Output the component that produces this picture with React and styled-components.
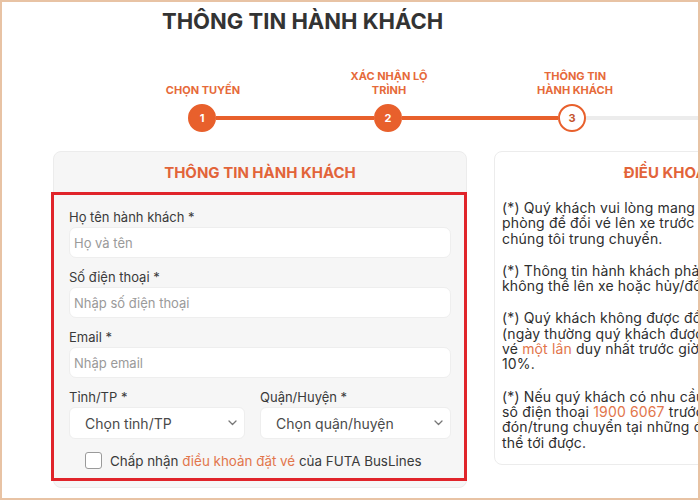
import React from "react";
import styled, { createGlobalStyle } from "styled-components";

const Global = createGlobalStyle`
  html, body { margin: 0; padding: 0; background: #fff; }
  * { box-sizing: border-box; }
  body { font-family: Inter, "Noto Sans", sans-serif; color: #333; }
`;

const Frame = styled.div`
  width: 700px;
  height: 500px;
  border: 2px solid #e8c3a4;
  overflow: hidden;
  background: #fff;
  position: relative;
`;

const Title = styled.h1`
  margin: 0;
  padding: 5px 0 0 160px;
  font-size: 22px;
  line-height: 29px;
  font-weight: 700;
  color: #333;
`;

const Stepper = styled.div`
  margin-top: 33px;
  padding-left: 140px;
`;

const LabelRow = styled.div`
  display: flex;
  align-items: flex-end;
  gap: 64px;
`;

const StepLabel = styled.div`
  width: 122px;
  text-align: center;
  font-size: 11px;
  line-height: 14px;
  font-weight: 700;
  color: #e66a3a;
`;

const TrackRow = styled.div`
  display: flex;
  align-items: center;
  margin-top: 7px;
  padding-left: 46px;
`;

const Circle = styled.div`
  width: 28px;
  height: 28px;
  border-radius: 50%;
  flex: none;
  display: flex;
  align-items: center;
  justify-content: center;
  font-size: 11px;
  font-weight: 700;
  background: ${(p) => (p.$done ? "#e8602c" : "#fff")};
  color: ${(p) => (p.$done ? "#fff" : "#c4552e")};
  border: 2px solid #e8602c;
`;

const Line = styled.div`
  height: 4px;
  width: ${(p) => p.$w}px;
  flex: ${(p) => (p.$w ? "none" : "1")};
  background: ${(p) => (p.$gray ? "#ececec" : "#e8602c")};
`;

const Cards = styled.div`
  display: flex;
  gap: 27px;
  margin-top: 19px;
  padding-left: 51px;
  align-items: flex-start;
`;

const Card = styled.div`
  flex: none;
  width: ${(p) => p.$w}px;
  border: 1px solid #ececec;
  border-radius: 8px;
  background: ${(p) => p.$bg};
`;

const CardHeader = styled.div`
  height: 40px;
  display: flex;
  align-items: center;
  justify-content: center;
  font-size: 15px;
  font-weight: 700;
  color: #e2643a;
  white-space: nowrap;
`;

const FormBox = styled.div`
  margin: 0 0 6px -3px;
  width: 416px;
  border: 3px solid #e0242a;
  padding: 14px 13px 9px 15px;
  display: flex;
  flex-direction: column;
  gap: 11px;
`;

const Field = styled.div`
  display: flex;
  flex-direction: column;
  gap: 2px;
`;

const Label = styled.label`
  font-size: 13px;
  line-height: 16px;
  color: #3a3a3a;
`;

const Input = styled.input`
  height: 31px;
  width: 100%;
  border: 1px solid #eeeeee;
  border-radius: 7px;
  background: #fff;
  padding: 0 4px;
  font-family: inherit;
  font-size: 13px;
  color: #333;
  outline: none;
  &::placeholder { color: #9a9a9a; }
`;

const Row = styled.div`
  display: grid;
  grid-template-columns: 176px 1fr;
  gap: 15px;
`;

const SelectBox = styled.div`
  height: 32px;
  border: 1px solid #eeeeee;
  border-radius: 6px;
  background: #fff;
  display: flex;
  align-items: center;
  justify-content: space-between;
  padding: 0 7px 0 15px;
  font-size: 14px;
  color: #4a4a4a;
`;

const Chevron = () => (
  <svg width="9" height="6" viewBox="0 0 9 6">
    <path d="M1 1l3.5 3.5L8 1" fill="none" stroke="#777" strokeWidth="1.3" strokeLinecap="round" strokeLinejoin="round" />
  </svg>
);

const CheckRow = styled.div`
  display: flex;
  align-items: center;
  gap: 8px;
  padding-left: 16px;
  margin-top: 2px;
  font-size: 13.4px;
  color: #3a3a3a;
`;

const Box = styled.span`
  width: 17px;
  height: 17px;
  border: 1.5px solid #9a9a9a;
  border-radius: 3px;
  background: #fff;
  flex: none;
`;

const Accent = styled.span`
  color: #e2754b;
`;

const Terms = styled.div`
  padding: 8px 8px 14px 7px;
  display: flex;
  flex-direction: column;
  gap: 17px;
`;

const Para = styled.p`
  margin: 0;
  font-size: 14px;
  letter-spacing: 0.15px;
  line-height: 15.3px;
  color: #2e2e2e;
  white-space: nowrap;
`;

export default function App() {
  return (
    <>
      <Global />
      <Frame>
        <Title>THÔNG TIN HÀNH KHÁCH</Title>
        <Stepper>
          <LabelRow>
            <StepLabel>CHỌN TUYẾN</StepLabel>
            <StepLabel>XÁC NHẬN LỘ<br />TRÌNH</StepLabel>
            <StepLabel>THÔNG TIN<br />HÀNH KHÁCH</StepLabel>
          </LabelRow>
          <TrackRow>
            <Circle $done>1</Circle>
            <Line $w={158} />
            <Circle $done>2</Circle>
            <Line $w={156} />
            <Circle>3</Circle>
            <Line $gray />
          </TrackRow>
        </Stepper>
        <Cards>
          <Card $w={414} $bg="#f6f6f6">
            <CardHeader>THÔNG TIN HÀNH KHÁCH</CardHeader>
            <FormBox>
              <Field>
                <Label>Họ tên hành khách *</Label>
                <Input placeholder="Họ và tên" />
              </Field>
              <Field>
                <Label>Số điện thoại *</Label>
                <Input placeholder="Nhập số điện thoại" />
              </Field>
              <Field>
                <Label>Email *</Label>
                <Input placeholder="Nhập email" />
              </Field>
              <Row>
                <Field>
                  <Label>Tỉnh/TP *</Label>
                  <SelectBox>Chọn tỉnh/TP<Chevron /></SelectBox>
                </Field>
                <Field>
                  <Label>Quận/Huyện *</Label>
                  <SelectBox>Chọn quận/huyện<Chevron /></SelectBox>
                </Field>
              </Row>
              <CheckRow>
                <Box />
                <span>
                  Chấp nhận <Accent>điều khoản đặt vé</Accent> của FUTA BusLines
                </span>
              </CheckRow>
            </FormBox>
          </Card>
          <Card $w={416} $bg="#fff">
            <CardHeader>ĐIỀU KHOẢN &amp; LƯU Ý</CardHeader>
            <Terms>
              <Para>
                (*) Quý khách vui lòng mang email có chứa mã vé đến văn<br />
                phòng để đổi vé lên xe trước giờ xuất bến ít nhất 60 phút để<br />
                chúng tôi trung chuyển.
              </Para>
              <Para>
                (*) Thông tin hành khách phải chính xác, nếu không sẽ<br />
                không thể lên xe hoặc hủy/đổi vé.
              </Para>
              <Para>
                (*) Quý khách không được đổi/trả vé vào các ngày Lễ Tết<br />
                (ngày thường quý khách được quyền chuyển đổi hoặc hủy<br />
                vé <Accent>một lần</Accent> duy nhất trước giờ xe chạy 24 giờ), phí hủy vé<br />
                10%.
              </Para>
              <Para>
                (*) Nếu quý khách có nhu cầu trung chuyển, vui lòng liên hệ<br />
                số điện thoại <Accent>1900 6067</Accent> trước khi đặt vé. Chúng tôi không<br />
                đón/trung chuyển tại những điểm xe trung chuyển không<br />
                thể tới được.
              </Para>
            </Terms>
          </Card>
        </Cards>
      </Frame>
    </>
  );
}
